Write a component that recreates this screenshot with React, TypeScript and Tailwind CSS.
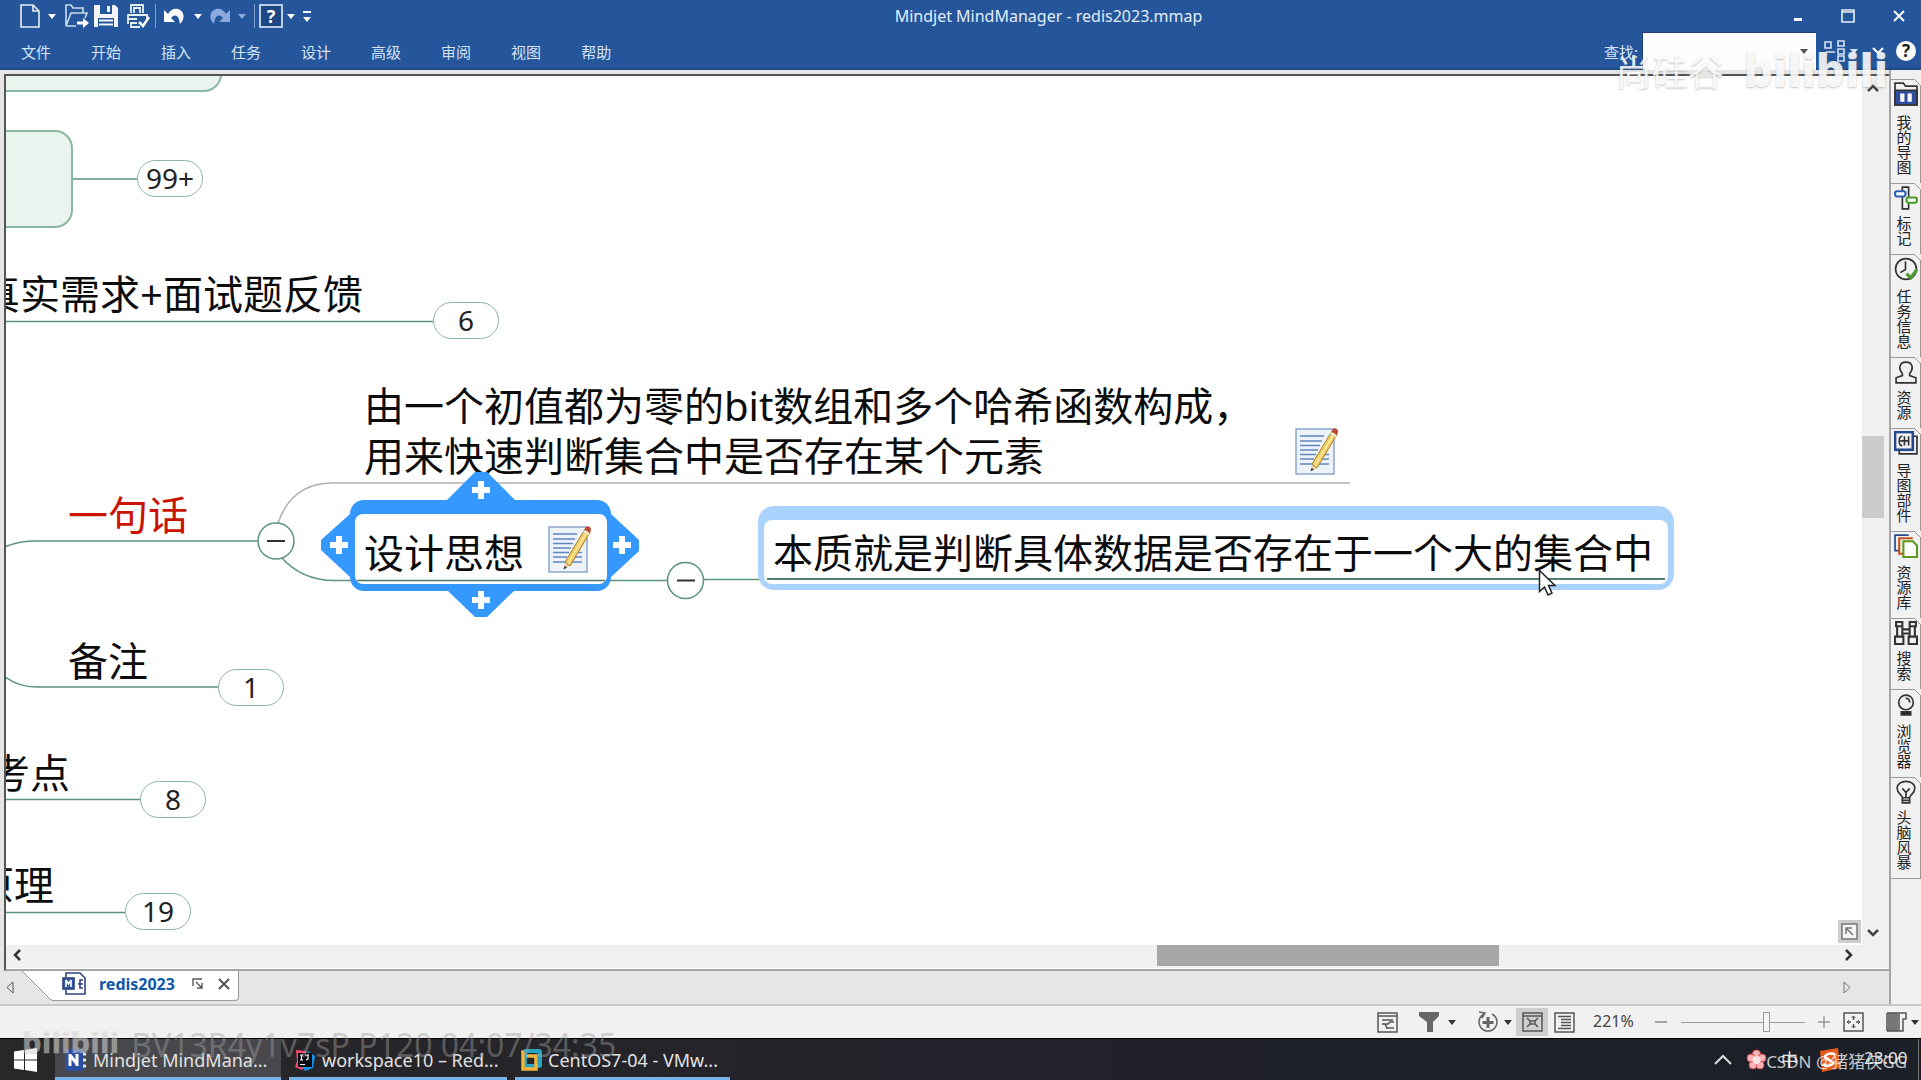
import { useState } from "react";
import type { ReactNode } from "react";

const menus = ["文件", "开始", "插入", "任务", "设计", "高级", "审阅", "视图", "帮助"];

const Caret = ({ className = "" }: { className?: string }) => (
  <svg width="8" height="5" viewBox="0 0 8 5" className={className} fill="currentColor">
    <path d="M0 0h8L4 5z" />
  </svg>
);

const NoteIcon = () => (
  <svg width="44" height="50" viewBox="0 0 44 50" fill="none">
    <rect x="1" y="3" width="38" height="45" fill="#eef3fb" stroke="#8ba6cc" strokeWidth="1.5" />
    <path d="M5 10h24M5 15h22M5 19.500h20M5 24h18M5 28.500h16M5 33h14M5 38h12M25 28.500h9M22 33h12M20 38h14" stroke="#5f86bd" strokeWidth="1.6" />
    <path d="M17 38l-1 7 6-3z" fill="#e9c9a0" />
    <path d="M15.500 45.500l1-3.500 2.500 1.500z" fill="#333" />
    <path d="M17 38L37 5l5 3.500L22 42z" fill="#f0cd62" stroke="#a8812a" strokeWidth="1" />
    <path d="M20 39.500L39.500 7" stroke="#fbe9a4" strokeWidth="1.500" />
    <path d="M36.500 5.500l5.500 3.500 1-3c.5-3-3.500-5-5.500-2.500z" fill="#c0483f" />
    <path d="M35.500 7l5.500 3.500" stroke="#e8e8e8" strokeWidth="1.500" />
  </svg>
);

const QuickBar = () => (
  <div className="flex items-center h-8 pl-5 text-white">
    <button aria-label="新建" className="flex items-center gap-2">
      <svg width="20" height="24" viewBox="0 0 20 24" fill="none" stroke="#e4efef" strokeWidth="1.600"><path d="M1 1h12l6 6v16H1zM13 1v6h6" /></svg>
      <Caret />
    </button>
    <button aria-label="打开" className="ml-2">
      <svg width="26" height="24" viewBox="0 0 26 24" fill="none" stroke="#c9dcea" strokeWidth="1.600">
        <path d="M2 22V1h5l2 3h10v5M2 22L7 9h16l-2 5M2 22h10" />
        <path d="M13 17.500h6v-3.500l6 5-6 5v-3.500h-6z" fill="#fff" stroke="none" />
      </svg>
    </button>
    <button aria-label="保存" className="ml-1">
      <svg width="24" height="24" viewBox="0 0 24 24">
        <path d="M0 1h21l3 3v19H0z" fill="#f2f6fa" />
        <path d="M6 1h12v9H6zM4 14h16v9H4z" fill="#25569b" />
        <path d="M13 2h3v6h-3zM5 15.500h14v2H5zM5 19.500h14v2H5z" fill="#f2f6fa" />
      </svg>
    </button>
    <button aria-label="打印" className="ml-2">
      <svg width="25" height="24" viewBox="0 0 25 24" fill="none" stroke="#e4efef" strokeWidth="1.800">
        <path d="M5 9V1h12v8M8 9V4h6v5M2 20V11h19v4M2 15h9M5 18v5h9M5 19h6" />
        <path d="M13 18l4 4 6-9" stroke="#fff" strokeWidth="2.500" />
      </svg>
    </button>
    <span className="w-px h-6 ml-1 bg-[#7f9fce]" />
    <button aria-label="撤销" className="flex items-center gap-2 ml-2">
      <svg width="22" height="18" viewBox="0 0 22 18"><path d="M0 3v12h11l-4-4c3-4 8-4 9 6 6-6 4-13-2-15-4-1-8 1-10 5z" fill="#fff" /></svg>
      <Caret />
    </button>
    <button aria-label="重做" className="flex items-center gap-2 ml-[6px] text-[#8ba9dc]">
      <svg width="22" height="18" viewBox="0 0 22 18"><path d="M22 3v12H11l4-4c-3-4-8-4-9 6C0 11 2 4 8 2c4-1 8 1 10 5z" fill="currentColor" /></svg>
      <Caret />
    </button>
    <span className="w-px h-6 ml-2 bg-[#7f9fce]" />
    <button aria-label="帮助选项" className="flex items-center gap-1 ml-1">
      <span className="flex items-center justify-center size-6 border-2 border-[#b9d0e4] bg-[#1d4782] text-[18px] leading-5 font-bold">?</span>
      <Caret />
    </button>
    <button aria-label="更多" className="flex flex-col items-center gap-1 ml-2">
      <span className="w-2 h-[2px] bg-white" />
      <Caret />
    </button>
  </div>
);

const Header = () => {
  const [query, setQuery] = useState("");
  return (
    <header className="relative bg-[#25569b] h-[70px] shrink-0 border-b-2 border-[#1e4a8a]">
      <div className="grid grid-cols-[1fr_auto_1fr] items-center h-8">
        <QuickBar />
        <h1 className="text-[16px] text-[#e3ecf6] pl-44">Mindjet MindManager - redis2023.mmap</h1>
        <div className="flex justify-end items-center gap-[38px] pr-4 text-white">
          <button aria-label="最小化"><svg width="10" height="14" viewBox="0 0 10 14"><path d="M1 9h8v3H1z" fill="#fff" /></svg></button>
          <button aria-label="最大化"><svg width="14" height="14" viewBox="0 0 14 14" fill="none" stroke="#e8f0f4" strokeWidth="1.600"><path d="M1 1h12v12H1zM1 3h12" /></svg></button>
          <button aria-label="关闭"><svg width="12" height="12" viewBox="0 0 12 12" stroke="#fff" strokeWidth="1.800"><path d="M1 1l10 10M11 1L1 11" /></svg></button>
        </div>
      </div>
      <div className="flex items-center justify-between h-[38px]">
        <nav className="flex gap-10 pl-[21px] pt-[2px] text-[15px] text-[#d5e4f4]">
          {menus.map((m) => (
            <button key={m}>{m}</button>
          ))}
        </nav>
        <div className="flex items-center h-full text-white pr-[5px]">
          <label htmlFor="find" className="text-[15px] text-[#d5e4f4] mr-1 pt-[2px]">查找:</label>
          <div className="flex items-center h-full w-[174px] bg-[#fdfdfd] border-t border-l border-[#1b3f74] pr-2">
            <input id="find" value={query} onChange={(e) => setQuery(e.target.value)} className="flex-1 min-w-0 h-full outline-none text-black text-[15px] px-1" />
            <button aria-label="查找历史" className="text-[#555]"><Caret /></button>
          </div>
          <button aria-label="查找选项" className="flex items-center gap-1 ml-2 text-[#d5e4f4]">
            <svg width="22" height="22" viewBox="0 0 22 22" fill="none" stroke="currentColor" strokeWidth="1.600"><path d="M1 2h6v6H1zM14 1h6v5h-6zM14 9h6v5h-6zM14 16h6v5h-6zM2 12h9" /></svg>
            <Caret />
          </button>
          <button aria-label="收起功能区" className="ml-[14px]">
            <svg width="12" height="8" viewBox="0 0 12 8" fill="none" stroke="#fff" strokeWidth="2"><path d="M1 1l5 5 5-5" /></svg>
          </button>
          <button aria-label="帮助" className="flex items-center justify-center size-5 rounded-full bg-white text-[#222] text-[17px] font-bold leading-5 ml-3">?</button>
        </div>
      </div>
    </header>
  );
};

// Counter pill at the end of a collapsed branch
const Count = ({ className, children }: { className: string; children: ReactNode }) => (
  <button className={`absolute flex items-center justify-center w-[66px] h-[37px] pb-[2px] rounded-full border-[1.5px] border-[#8bb8a2] bg-white text-[28px] leading-none text-[#222] ${className}`}>
    {children}
  </button>
);

const Plus = ({ x, y }: { x: number; y: number }) => (
  <path d={`M${x - 9} ${y}h18M${x} ${y - 9}v18`} stroke="#fff" strokeWidth="6" />
);

const MapCanvas = () => (
  <div className="relative flex-1 min-w-0 overflow-hidden bg-white text-[40px] leading-[50px] text-[#0c0c0c] whitespace-nowrap">
    <svg className="absolute inset-0 w-full h-full" fill="none" strokeWidth="1.500">
      <g transform="translate(-6 -76)">
        <g stroke="#8bb8a2" fill="#eaf4ee" strokeWidth="2">
          <rect x="-40" y="30" width="261" height="61" rx="17" />
          <rect x="-40" y="131" width="112" height="96" rx="17" />
        </g>
        <g stroke="#5b947a">
          <path d="M73 179H138M0 321.500H434M0 549Q16 541 36 541H258M0 673Q16 687 36 687H219M0 799.500H141M0 912.500H126" />
          <path d="M281 557Q302 580.500 334 580.500H668M704 579.500H760" />
        </g>
        <path d="M278 523Q292 483 332 483H1350" stroke="#b0b0b0" />
        <g stroke="#5b947a" fill="#fff">
          <circle cx="276" cy="541" r="18" />
          <circle cx="685.500" cy="580.500" r="18" />
        </g>
        <path d="M267 541h18M677 580.500h18" stroke="#333" strokeWidth="2" />
      </g>
    </svg>

    <p className="absolute left-[-26px] top-[193px]">真实需求+面试题反馈</p>
    <p className="absolute left-[358px] top-[305px]">由一个初值都为零的bit数组和多个哈希函数构成，<br />用来快速判断集合中是否存在某个元素</p>
    <div className="absolute left-[1289px] top-[350px]"><NoteIcon /></div>
    <p className="absolute left-[62px] top-[414px] text-[#c91402]">一句话</p>
    <p className="absolute left-[62px] top-[560px]">备注</p>
    <p className="absolute left-[-16px] top-[672px]">考点</p>
    <p className="absolute left-[-32px] top-[784px]">原理</p>

    <Count className="left-[131px] top-[84px]">99+</Count>
    <Count className="left-[427px] top-[226px]">6</Count>
    <Count className="left-[212px] top-[593px]">1</Count>
    <Count className="left-[134px] top-[705px]">8</Count>
    <Count className="left-[119px] top-[817px]">19</Count>

    {/* selected topic with its four add handles */}
    <svg className="absolute left-[313px] top-[394px]" width="322" height="150" viewBox="319 470 322 150">
      <path d="M350 514a14 14 0 0 1 14-14H447L475 472H487L515 500H597a14 14 0 0 1 14 14L639 540V551L611 577a14 14 0 0 1-14 14H514L487 617H475L448 591H364a14 14 0 0 1-14-14L321 550V540Z" fill="#3598fe" />
      <rect x="355" y="514" width="252" height="70" rx="8" fill="#fff" />
      <path d="M357 580.500H605" stroke="#4c7a65" strokeWidth="1.500" />
      <Plus x={481} y={490} />
      <Plus x={481} y={600} />
      <Plus x={339} y={545} />
      <Plus x={622} y={545} />
    </svg>
    <div className="absolute left-[358px] top-[448px] flex items-start gap-6">
      <span className="pt-1">设计思想</span>
      <NoteIcon />
    </div>

    <div className="absolute left-[752px] top-[430px] rounded-2xl bg-[#a9d2fc] pt-[14px] px-[6px] pb-[6px]">
      <div className="bg-white rounded-lg px-[3px] pb-1">
        <p className="pl-[6px] pr-3 pt-2 border-b-2 border-[#54806c]">本质就是判断具体数据是否存在于一个大的集合中</p>
      </div>
    </div>

    <svg className="absolute left-[1532px] top-[493px]" width="20" height="28" viewBox="0 0 20 28">
      <path d="M1.500 1.500v21l5-4.500 3.500 8 4-1.800-3.500-7.700h6.500z" fill="#fff" stroke="#222" strokeWidth="1.500" />
    </svg>
  </div>
);

const VScroll = () => (
  <div className="flex flex-col items-center w-[27px] bg-[#f0f0f0] text-[#444]">
    <button aria-label="向上滚动" className="h-6 pr-[5px] flex items-center"><svg width="12" height="8" viewBox="0 0 12 8" fill="none" stroke="currentColor" strokeWidth="2.500"><path d="M1 7l5-5 5 5" /></svg></button>
    <div className="flex flex-col flex-1 w-full pr-[5px]">
      <div className="grow-[336]" />
      <div className="grow-[81] bg-[#cbcbcb]" />
      <div className="grow-[403]" />
    </div>
    <button aria-label="向下滚动" className="h-6 pr-[5px] flex items-center"><svg width="12" height="8" viewBox="0 0 12 8" fill="none" stroke="currentColor" strokeWidth="2.500"><path d="M1 1l5 5 5-5" /></svg></button>
  </div>
);

const DocArea = () => (
  <main className="flex flex-col flex-1 min-w-0 bg-[#e6e6e6] border-r-2 border-[#a5a5a5]">
    <div className="flex flex-col flex-1 min-h-0 mt-1 ml-1 border-t-2 border-l-2 border-[#555] border-b-2 border-b-[#a5a5a5]">
      <div className="flex flex-1 min-h-0 relative">
        <MapCanvas />
        <VScroll />
        <button aria-label="概览" className="absolute right-[28px] bottom-[2px] size-[23px] flex items-center justify-center bg-[#ccc]">
          <svg width="17" height="17" viewBox="0 0 17 17" fill="none" stroke="#777" strokeWidth="1.500"><rect x="1" y="1" width="15" height="15" fill="#f4f4f4" /><path d="M5 11V5h6M5 5l7 7" /></svg>
        </button>
      </div>
      <div className="flex items-start h-6 bg-[#f0f0f0] text-[#333] border-b border-white">
        <button aria-label="向左滚动" className="w-[22px] h-5 flex items-center justify-center"><svg width="8" height="12" viewBox="0 0 8 12" fill="none" stroke="currentColor" strokeWidth="2.500"><path d="M7 1L2 6l5 5" /></svg></button>
        <div className="flex flex-1 h-[21px]">
          <div className="grow-[1128]" />
          <div className="grow-[341] bg-[#a6a6a6]" />
          <div className="grow-[338]" />
        </div>
        <button aria-label="向右滚动" className="w-6 h-5 mr-[28px] flex items-center justify-center"><svg width="8" height="12" viewBox="0 0 8 12" fill="none" stroke="currentColor" strokeWidth="2.500"><path d="M1 1l5 5-5 5" /></svg></button>
      </div>
    </div>
    <div className="flex items-start justify-between h-[33px]">
      <div className="flex">
        <button aria-label="上一个文档" className="w-5 h-8 mr-[2px] flex items-center justify-center"><svg width="8" height="13" viewBox="0 0 8 13" fill="none" stroke="#555"><path d="M7 1v11L1 6.500z" /></svg></button>
        <div className="flex">
          <svg width="30" height="30" viewBox="0 0 30 30"><path d="M0 0h30v29h-1z" fill="#fff" /><path d="M0 0l29 29h1" fill="none" stroke="#999" /></svg>
          <div className="flex items-center h-[30px] bg-white border-r border-b border-[#999] rounded-br pl-[10px] pr-2 pb-1">
            <svg width="24" height="23" viewBox="0 0 24 23" fill="none" stroke="#2b4580" strokeWidth="1.600">
              <path d="M4 5V1h14l5 5v16H4v-4" />
              <rect x="1" y="6" width="11" height="11" fill="#34569c" />
              <path d="M4 8v7M9 8v7M4 8l2.500 4L9 8" stroke="#fff" />
              <path d="M16 12h2M21 8h-3v8h3M18 12h3" />
            </svg>
            <span className="ml-[13px] text-[16px] font-bold text-[#0d58ab]">redis2023</span>
            <button aria-label="还原窗口" className="ml-[17px]"><svg width="12" height="11" viewBox="0 0 12 11" fill="none" stroke="#555" strokeWidth="1.400"><path d="M1 8V1h9M4 4l6 6M10 5v5H5" /></svg></button>
            <button aria-label="关闭文档" className="ml-[14px]"><svg width="12" height="12" viewBox="0 0 12 12" stroke="#555" strokeWidth="2"><path d="M1 1l10 10M11 1L1 11" /></svg></button>
          </div>
        </div>
      </div>
      <button aria-label="下一个文档" className="h-8 mr-[38px] flex items-center"><svg width="8" height="13" viewBox="0 0 8 13" fill="none" stroke="#777"><path d="M1 1v11l6-5.500z" /></svg></button>
    </div>
  </main>
);

const railTabs: { label: string; size: string; icon: ReactNode }[] = [
  { label: "我的导图", size: "h-[104px]", icon: <><path d="M1 22V1h8l2 3h11v18z" /><rect x="1" y="8" width="21" height="14" fill="#2f4f9e" /><path d="M8 11v8M15 11v8" stroke="#fff" strokeWidth="4" /></> },
  { label: "标记", size: "h-[71px]", icon: <><path d="M8 1h6v21H8z" /><rect x="1" y="5" width="10" height="5" fill="#fff" stroke="#2b5fb4" strokeWidth="2" rx="2" /><rect x="12" y="11" width="10" height="5" fill="#fff" stroke="#4c9a2a" strokeWidth="2" rx="2" /></> },
  { label: "任务信息", size: "h-[103px]", icon: <><circle cx="11.500" cy="11.500" r="10" /><path d="M11 4v8l-5 3" /><path d="M12 16l4 4 6-8" stroke="#4c9a2a" strokeWidth="3" /></> },
  { label: "资源", size: "h-[71px]", icon: <path d="M8 13C4 8 5 2 11.500 2S19 8 15 13v2l6 2v5H2v-5l6-2z" /> },
  { label: "导图部件", size: "h-[103px]", icon: <><path d="M18 5h4v17H5v-4" /><rect x="1" y="1" width="17" height="17" stroke="#24488c" strokeWidth="2.500" /><path d="M8 5c-4 0-4 9 0 9M6 9.500h8M10 5v9M14 5v9" /></> },
  { label: "资源库", size: "h-[87px]", icon: <><path d="M14 1H1v15h4" stroke="#24488c" /><path d="M18 4H5v15h4" stroke="#c8501e" strokeWidth="2" /><path d="M9 7h9l4 4v11H9z" fill="#fff" stroke="#5a9a1e" strokeWidth="2" /></> },
  { label: "搜索", size: "h-[71px]", icon: <path d="M2 1h6v4H2zM15 1h6v4h-6zM3 5v10M8 5v10M15 5v10M20 5v10M1 15h8v7H1zM14 15h8v7h-8zM8 8h7M8 12h7" strokeWidth="2" /> },
  { label: "浏览器", size: "h-[88px]", icon: <><circle cx="11.500" cy="10" r="7" /><path d="M11 6c3 0 4 2 4 4" /><path d="M7 19h9v3H7z" fill="#222" /></> },
  { label: "头脑风暴", size: "h-[102px]", icon: <path d="M8 17c0-3-5-4-5-9 0-9 17-9 17 0 0 5-5 6-5 9zM8 17v5h7v-5M8 19.500h7M8 8l3.500 4L15 8M11.500 12v5" /> },
];

const Rail = () => (
  <aside className="w-[30px] shrink-0 pt-[9px] bg-[#f0f0f0]">
    {railTabs.map((t) => (
      <button key={t.label} className={`relative flex flex-col items-center justify-between w-full pt-[2px] pb-2 border-t border-r border-[#999] bg-[#f1f1f1] last:border-b ${t.size}`}>
        <svg width="24" height="24" viewBox="0 0 23 23" fill="none" stroke="#333" strokeWidth="1.600">{t.icon}</svg>
        <span className="mr-1 text-[15px] leading-4 text-[#222] [writing-mode:vertical-rl]">{t.label}</span>
        <svg className="absolute right-[-1px] top-[-1px]" width="7" height="7" viewBox="0 0 7 7"><path d="M0 0h7v7z" fill="#f0f0f0" /><path d="M0 0l7 7" stroke="#999" /></svg>
      </button>
    ))}
  </aside>
);

const StatusBar = () => {
  const [zoom, setZoom] = useState(70);
  return (
    <div className="flex items-center justify-end h-[34px] shrink-0 bg-[#f1f1f1] border-t-2 border-[#c8c8c8] text-[#555]">
      <button aria-label="备注"><svg width="21" height="21" viewBox="0 0 21 21" fill="none" stroke="currentColor" strokeWidth="1.500"><path d="M1 1h19v19H1zM1 4h19M5 8h11M5 12h6l2-2h4M9 16h8M8 12l2 4" /></svg></button>
      <button aria-label="筛选" className="flex items-center gap-2 ml-5">
        <svg width="22" height="20" viewBox="0 0 22 20" fill="#666"><path d="M1 0h20v4l-6 6v10H9V10L1 4z" /></svg>
        <Caret className="text-[#333]" />
      </button>
      <button aria-label="展开级别" className="flex items-center gap-1 ml-5">
        <svg width="24" height="24" viewBox="0 0 24 24" fill="none" stroke="#666" strokeWidth="1.600"><path d="M8 4a9 9 0 1 0 8 0M3 2l6 1-3 5" /><path d="M12 7v11M6.500 12.500h11" strokeWidth="3" /></svg>
        <Caret className="text-[#333]" />
      </button>
      <button aria-label="导图视图" className="flex items-center justify-center w-8 h-7 ml-1 bg-[#cfcfcf]">
        <svg width="21" height="20" viewBox="0 0 21 20" fill="none" stroke="currentColor" strokeWidth="1.500"><path d="M1 1h19v18H1zM1 4h19" /><path d="M5 6l3 3h5l3-3M5 15l3-3h5l3 3M8 9v3M13 9v3" /></svg>
      </button>
      <button aria-label="大纲视图" className="ml-[6px] mr-[2px]"><svg width="21" height="21" viewBox="0 0 21 21" fill="none" stroke="currentColor" strokeWidth="1.500"><path d="M1 1h19v19H1zM4 4.500h13M7 7.500h10M7 10.500h10M7 13.500h10M4 16.500h13" /></svg></button>
      <span className="w-[42px] ml-4 pb-[2px] text-[16px] text-[#444]">221%</span>
      <button aria-label="缩小" className="ml-5"><svg width="12" height="12" viewBox="0 0 12 12" stroke="#888" strokeWidth="1.500"><path d="M0 6h12" /></svg></button>
      <input
        type="range"
        aria-label="缩放"
        value={zoom}
        onChange={(e) => setZoom(Number(e.target.value))}
        className="w-[124px] ml-[14px] h-5 appearance-none bg-transparent bg-[linear-gradient(#999,#999)] bg-[length:100%_1px] bg-center bg-no-repeat [&::-webkit-slider-thumb]:appearance-none [&::-webkit-slider-thumb]:w-[7px] [&::-webkit-slider-thumb]:h-5 [&::-webkit-slider-thumb]:bg-[#f4f4f4] [&::-webkit-slider-thumb]:border [&::-webkit-slider-thumb]:border-[#999]"
      />
      <button aria-label="放大" className="ml-[13px]"><svg width="12" height="12" viewBox="0 0 12 12" stroke="#999" strokeWidth="1.500"><path d="M0 6h12M6 0v12" /></svg></button>
      <button aria-label="适合窗口" className="ml-[13px]"><svg width="21" height="20" viewBox="0 0 21 20" fill="none" stroke="currentColor" strokeWidth="1.500"><path d="M1 1h19v18H1z" /><path d="M10.500 4v4M10.500 12v4M4 10h4M13 10h4" /><path d="M8.500 6l2-2 2 2M8.500 14l2 2 2-2M6 8l-2 2 2 2M15 8l2 2-2 2" strokeWidth="1" /></svg></button>
      <button aria-label="任务窗格" className="flex items-center gap-1 ml-[22px] mr-[2px]">
        <svg width="21" height="20" viewBox="0 0 21 20" fill="none" stroke="currentColor" strokeWidth="1.500"><rect x="0" y="1" width="12" height="18" fill="#777" stroke="none" /><path d="M1 1h19v6h-3v12H1M13 2v17" /></svg>
        <Caret className="text-[#333]" />
      </button>
    </div>
  );
};

const tasks: { title: string; size: string; icon: ReactNode }[] = [
  { title: "Mindjet MindMana...", size: "w-[226px] pl-[10px] bg-[#48484c]", icon: <><rect width="19" height="22" rx="4" fill="#2b4fa3" /><path d="M5 5v12M12 5v12M5 6l7 9" stroke="#fff" strokeWidth="3" /><path d="M18 5h3M18 11h3M18 17h3" stroke="#dfe6f5" strokeWidth="3" /></> },
  { title: "workspace10 – Red...", size: "w-[218px] pl-[5px]", icon: <><path d="M2 1l10 1 3 10-7 9-7-3 2-6z" fill="#fc4668" /><path d="M14 2l7 5-2 12-8 3-3-4z" fill="#1692e6" /><rect x="4" y="4" width="14" height="14" fill="#0b0b12" /><path d="M6 6h3M7.500 6v5M6 11h3M11 6h4M14 6v4l-2 1M6 15.500h5" stroke="#fff" strokeWidth="1.200" /></> },
  { title: "CentOS7-04 - VMw...", size: "w-[215px] pl-[5px]", icon: <><rect x="5" y="2" width="15" height="15" rx="1" fill="none" stroke="#2aa6c4" strokeWidth="4" /><path d="M4 3h-1v17h13v-13H7" fill="none" stroke="#f0b63a" strokeWidth="3.500" /></> },
];

const Taskbar = () => (
  <footer className="flex items-stretch h-[42px] shrink-0 bg-linear-to-r from-[#292829] via-[#22222a] to-[#1a1f28] border-t border-black text-[#e2e2e2]">
    <button aria-label="开始" className="w-[55px] flex items-center pl-[14px]">
      <svg width="23" height="24" viewBox="0 0 23 24" fill="#fff"><path d="M0 3.500l10-1.500v9.500H0zM11 2l12-2v11.500H11zM0 12.500h10V22L0 20.500zM11 12.500h12V24l-12-2z" /></svg>
    </button>
    <div className="flex gap-x-[8px]">
      {tasks.map((t) => (
        <button key={t.title} className={`flex items-center gap-[6px] pt-1 border-b-[3px] border-[#76b3ea] text-[18px] whitespace-nowrap overflow-hidden ${t.size}`}>
          <svg className="shrink-0" width="22" height="22" viewBox="0 0 22 22">{t.icon}</svg>
          {t.title}
        </button>
      ))}
    </div>
    <div className="flex items-center ml-auto pr-2 border-r border-[#777] mr-[2px]">
      <button aria-label="显示隐藏的图标"><svg width="18" height="11" viewBox="0 0 18 11" fill="none" stroke="#ddd" strokeWidth="2"><path d="M1 10l8-8 8 8" /></svg></button>
      <svg className="ml-[14px]" width="21" height="22" viewBox="0 0 21 22" fill="#f8b4b4" stroke="#d8494c"><circle cx="10.500" cy="5" r="4" /><circle cx="16" cy="9" r="4" /><circle cx="14" cy="16" r="4" /><circle cx="7" cy="16" r="4" /><circle cx="5" cy="9" r="4" /><circle cx="10.500" cy="11" r="4" fill="#fce4e4" stroke="none" /></svg>
      <span className="ml-[14px] text-[17px]">中</span>
      <svg className="ml-5" width="22" height="24" viewBox="0 0 22 24"><path d="M2 3L20 0l2 20-18 4z" fill="#e8591a" /><path d="M17 6C9 4 4 9 9 11s8 4 4 6-6 1-8-1" fill="none" stroke="#fff" strokeWidth="2.500" /></svg>
      <span className="w-[46px] ml-6 text-[17px] pb-1">23:00</span>
    </div>
  </footer>
);

export default function App() {
  return (
    <div className="relative flex flex-col h-screen min-h-[900px] overflow-hidden bg-[#f0f0f0] font-['Noto_Sans','Noto_Sans_CJK_SC',sans-serif]">
      <Header />
      <div className="flex flex-1 min-h-0">
        <DocArea />
        <Rail />
      </div>
      <StatusBar />
      <Taskbar />

      {/* video overlay marks */}
      <div className="pointer-events-none absolute top-[30px] right-[33px] flex items-center gap-5 text-white/85 [text-shadow:0_1px_2px_rgb(120_120_120/0.45)] whitespace-nowrap">
        <span className="text-[36px] leading-[70px] pt-2">尚硅谷</span>
        <span className="text-[46px] leading-[70px] font-extrabold">bilibili</span>
      </div>
      <div className="pointer-events-none absolute bottom-[19px] left-[22px] flex items-end gap-3 whitespace-nowrap">
        <span className="text-[31px] leading-10 font-extrabold text-white/40 [text-shadow:0_1px_1px_rgb(130_130_130/0.3)]">bilibili</span>
        <span className="text-[32px] leading-8 text-[#a0a0a0]/45">BV13R4y1v7sP P120 04:07/34:35</span>
      </div>
      <span className="pointer-events-none absolute bottom-[6px] right-[14px] text-[17px] leading-6 text-white/75">CSDN @猪猪侠GG</span>
    </div>
  );
}
